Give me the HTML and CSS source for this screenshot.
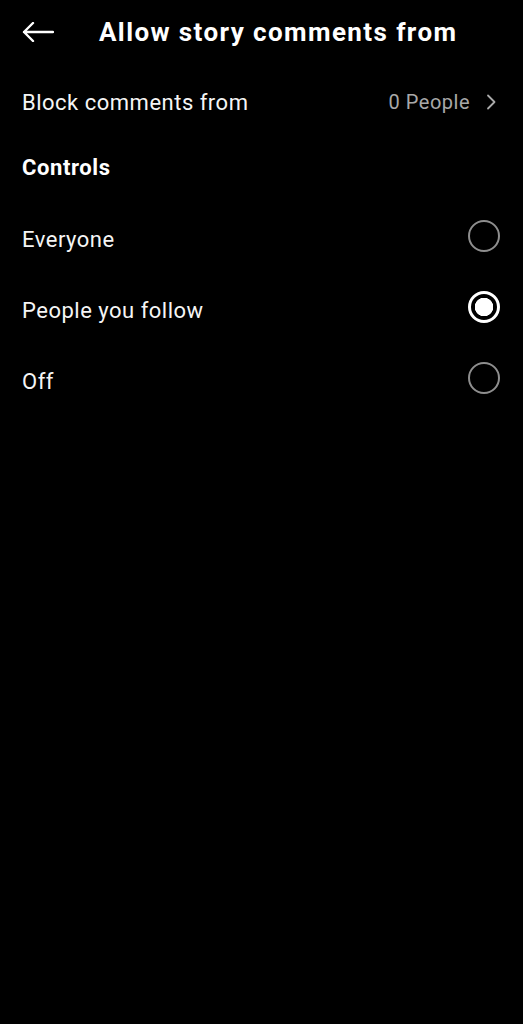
FILE: index.html
```html
<!DOCTYPE html>
<html lang="en">
<head>
    <meta charset="UTF-8">
    <meta name="viewport" content="width=device-width, initial-scale=1.0">
    <title>Allow story comments from</title>
    <link rel="stylesheet" href="styles.css">
</head>
<body>
    <header class="topbar">
        <svg class="back" width="32" height="20" viewBox="0 0 32 20">
            <path d="M31 10H2M11 1L2 10l9 9" fill="none" stroke="#fff" stroke-width="2.4" stroke-linecap="round" stroke-linejoin="round"/>
        </svg>
        <h1>Allow story comments from</h1>
    </header>

    <div class="row block-row">
        <span class="label">Block comments from</span>
        <span class="value">0 People
            <svg class="chevron" width="10" height="16" viewBox="0 0 10 16">
                <path d="M2 1.5l6.5 6.5L2 14.5" fill="none" stroke="#aaa" stroke-width="1.8" stroke-linecap="round" stroke-linejoin="round"/>
            </svg>
        </span>
    </div>

    <h2 class="section">Controls</h2>

    <div class="options">
        <div class="row option">
            <span class="label">Everyone</span>
            <span class="radio"></span>
        </div>
        <div class="row option">
            <span class="label">People you follow</span>
            <span class="radio checked"></span>
        </div>
        <div class="row option">
            <span class="label">Off</span>
            <span class="radio"></span>
        </div>
    </div>
</body>
</html>
```

FILE: styles.css
```css
body {
    margin: 0;
    background-color: #000;
    color: #f5f5f5;
    font-family: Roboto, "Noto Sans", sans-serif;
    min-height: 1024px;
}
.topbar {
    display: flex;
    align-items: center;
    height: 64px;
    padding: 0 22px;
}
.back {
    flex: none;
}
.topbar h1 {
    margin: 0 0 0 45px;
    font-size: 26px;
    letter-spacing: 1.4px;
    font-weight: 700;
    color: #fff;
}
.row {
    display: flex;
    align-items: center;
    justify-content: space-between;
    padding: 0 23px 0 22px;
}
.label {
    font-size: 22px;
    letter-spacing: 0.5px;
}
.block-row {
    height: 76px;
}
.value {
    display: flex;
    align-items: center;
    gap: 16px;
    font-size: 20px;
    letter-spacing: 0.5px;
    color: #a8a8a8;
}
.chevron {
    margin-right: 4px;
}
.section {
    margin: 0;
    padding: 0 22px;
    height: 56px;
    line-height: 56px;
    font-size: 22px;
    letter-spacing: 0.6px;
    font-weight: 700;
    color: #fff;
}
.options {
    padding-top: 6px;
}
.option {
    height: 71px;
}
.option .label {
    padding-top: 4px;
}
.radio {
    box-sizing: border-box;
    width: 32px;
    height: 32px;
    margin-bottom: 4px;
    border: 2px solid #8e8e8e;
    border-radius: 50%;
}
.radio.checked {
    border: 3px solid #fff;
    background: radial-gradient(circle, #fff 0 9px, transparent 9.5px);
}
```
